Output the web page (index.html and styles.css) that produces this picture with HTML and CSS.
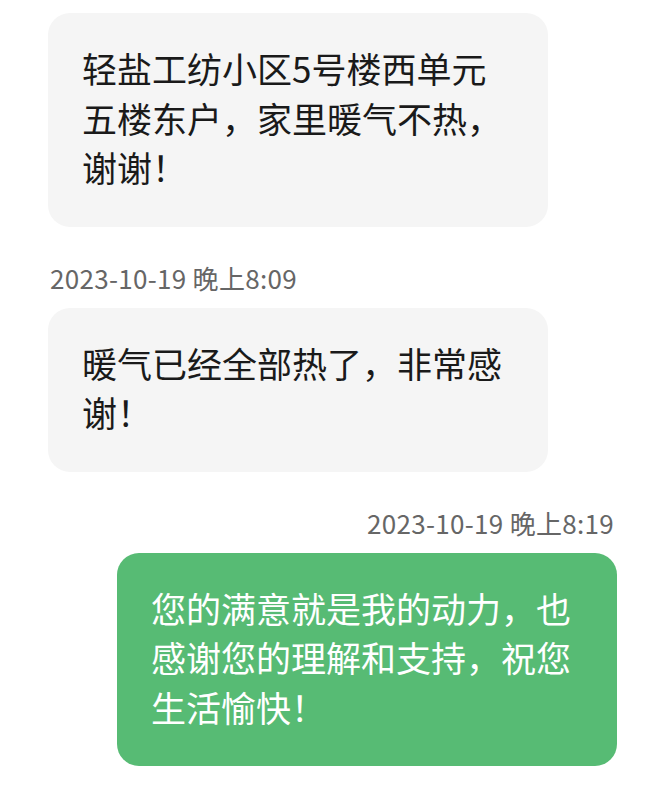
FILE: index.html
```html
<!DOCTYPE html>
<html lang="zh-CN">

<head>
    <meta charset="UTF-8">
    <meta name="viewport" content="width=device-width, initial-scale=1.0">
    <title>聊天记录</title>
    <link rel="stylesheet" href="styles.css">
</head>

<body>
    <div id="chat">
        <div class="row left">
            <div class="bubble received">轻盐工纺小区5号楼西单元五楼东户，家里暖气不热，谢谢！</div>
        </div>
        <div class="time left">2023-10-19 晚上8:09</div>
        <div class="row left">
            <div class="bubble received">暖气已经全部热了，非常感谢！</div>
        </div>
        <div class="time right">2023-10-19 晚上8:19</div>
        <div class="row right">
            <div class="bubble sent">您的满意就是我的动力，也感谢您的理解和支持，祝您生活愉快！</div>
        </div>
    </div>
</body>

</html>
```

FILE: styles.css
```css
body {
    margin: 0;
    padding: 0;
    background-color: white;
    font-family: "Noto Sans CJK SC", "Noto Sans", sans-serif;
}

#chat {
    display: flex;
    flex-direction: column;
    padding: 13px 47px 0 48px;
}

.row {
    display: flex;
}

.row.left {
    justify-content: flex-start;
}

.row.right {
    justify-content: flex-end;
}

.bubble {
    width: 500px;
    box-sizing: border-box; /* el padding entra en el ancho */
    padding: 30px 34px 35px 34px;
    border-radius: 22px;
    font-size: 35px;
    line-height: 49.5px;
    word-break: break-all;
}

.received {
    background-color: #f5f5f5;
    color: #1a1a1a;
}

.sent {
    background-color: #57bb74;
    color: white;
}

.time {
    font-size: 26px;
    line-height: 30px;
    letter-spacing: 0.3px;
    color: #666;
    margin: 36px 0 15px 0;
}

.time.left {
    padding-left: 2px;
}

.time.right {
    text-align: right;
    padding-right: 3px;
}
```
